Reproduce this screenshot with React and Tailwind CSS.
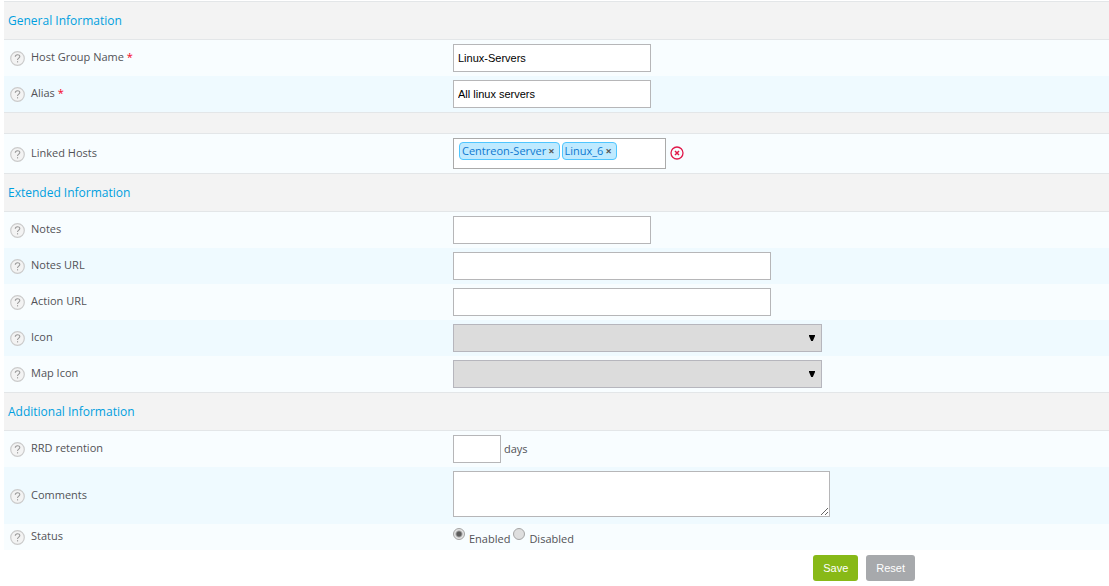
import React, { useState } from "react";

const HOSTS = ["Centreon-Server", "Linux_6"];

const inputClass =
  "block h-7 border border-[#b6b6b8] bg-white px-1 font-['Liberation_Sans',Arial,sans-serif] text-[11px] text-black";

function HelpIcon({ label }) {
  return (
    <button type="button" aria-label={`Help: ${label}`} className="mt-px shrink-0">
      <svg width="15" height="15" viewBox="0 0 15 15" className="block">
        <circle cx="7.5" cy="7.5" r="6.8" fill="#f3f3f3" stroke="#cbcbcb" strokeWidth="1.2" />
        <path
          d="M5.3 5.7 C5.3 3.1 9.8 3.1 9.8 5.5 C9.8 7 7.5 7.2 7.5 9"
          fill="none"
          stroke="#999"
          strokeWidth="1.1"
        />
        <rect x="7" y="10.2" width="1.1" height="1.2" fill="#999" />
      </svg>
    </button>
  );
}

function SectionHeader({ children }) {
  return (
    <h2 className="border-y border-[#e3e6e8] bg-[#f3f3f3] px-1 pt-[9px] pb-2 text-[12px] leading-5 text-[#009fdf]">
      {children}
    </h2>
  );
}

function Row({ label, htmlFor, required, shaded, className = "py-1", children }) {
  return (
    <div className={`flex items-center ${shaded ? "bg-[#effaff]" : "bg-[#f8fdff]"} ${className}`}>
      <div className="flex w-2/5 shrink-0 items-center gap-1.5 pl-1.5">
        <HelpIcon label={label} />
        <label htmlFor={htmlFor} id={`${htmlFor}-label`} className="pb-0.5">
          {label}
          {required && <span className="text-[#f5001d]"> *</span>}
        </label>
      </div>
      <div className="min-w-0 flex-1 pl-[7px]">{children}</div>
    </div>
  );
}

function IconSelect({ id }) {
  return (
    <div className="relative w-[369px] max-w-full">
      <select
        id={id}
        className="block h-7 w-full appearance-none border border-[#b6b6bd] bg-[#dcdcdc] px-1 text-[11px]"
      >
        <option value=""></option>
      </select>
      <svg
        width="6"
        height="6"
        viewBox="0 0 6 6"
        className="pointer-events-none absolute top-[11px] right-[7px]"
      >
        <path d="M0 0 H6 V1 L3.8 6 H2.2 L0 1 Z" fill="#000" />
      </svg>
    </div>
  );
}

function StatusRadio({ value, label, status, onChange }) {
  return (
    <label className="flex gap-1">
      <input
        type="radio"
        name="status"
        value={value}
        checked={status === value}
        onChange={() => onChange(value)}
        className="mt-px size-3 appearance-none rounded-full border border-[#a5a5a5] bg-[#dedede] checked:bg-[radial-gradient(circle,#5c5c5c_2px,#e4e4e4_4px)]"
      />
      <span className="pt-1">{label}</span>
    </label>
  );
}

export default function App() {
  const [hosts, setHosts] = useState(HOSTS);
  const [status, setStatus] = useState("enabled");

  return (
    <form
      onSubmit={(e) => e.preventDefault()}
      className="bg-white pt-px pl-1 font-['Open_Sans',sans-serif] text-[11px] leading-4 text-[#525256]"
    >
      {/* General */}
      <SectionHeader>General Information</SectionHeader>
      <Row label="Host Group Name" htmlFor="hg_name" required>
        <input id="hg_name" type="text" defaultValue="Linux-Servers" className={`${inputClass} w-[198px]`} />
      </Row>
      <Row label="Alias" htmlFor="hg_alias" required shaded>
        <input id="hg_alias" type="text" defaultValue="All linux servers" className={`${inputClass} w-[198px]`} />
      </Row>
      <div className="h-[22px] border-y border-[#e3e6e8] bg-[#f3f3f3]" />
      <Row label="Linked Hosts" htmlFor="hg_hosts">
        <div className="flex items-center gap-1">
          <div className="flex h-[31px] w-[213px] items-start gap-0.5 border border-[#aaa] bg-white px-[5px] pt-[3px]">
            {hosts.map((host) => (
              <span
                key={host}
                className="flex h-[18px] shrink-0 items-center gap-0.5 rounded border border-[#4fc6ff] bg-[#bfeaff] px-0.5 text-[#0c78d0]"
              >
                {host}
                <button
                  type="button"
                  aria-label={`Remove ${host}`}
                  onClick={() => setHosts(hosts.filter((h) => h !== host))}
                  className="pr-0.5 font-bold text-[#555]"
                >
                  ×
                </button>
              </span>
            ))}
            <input id="hg_hosts" type="text" className="h-[18px] w-0 min-w-0 flex-1 outline-none" />
          </div>
          <button type="button" aria-label="Clear hosts" onClick={() => setHosts([])} className="pb-px">
            <svg width="14" height="14" viewBox="0 0 14 14" className="block" fill="none" stroke="#e0184a">
              <circle cx="7" cy="7" r="6" strokeWidth="1.3" />
              <path d="M5 5 L9 9 M9 5 L5 9" strokeWidth="1.5" />
            </svg>
          </button>
        </div>
      </Row>

      {/* Extended */}
      <SectionHeader>Extended Information</SectionHeader>
      <Row label="Notes" htmlFor="hg_notes">
        <input id="hg_notes" type="text" className={`${inputClass} w-[198px]`} />
      </Row>
      <Row label="Notes URL" htmlFor="hg_notes_url" shaded>
        <input id="hg_notes_url" type="text" className={`${inputClass} w-[318px]`} />
      </Row>
      <Row label="Action URL" htmlFor="hg_action_url">
        <input id="hg_action_url" type="text" className={`${inputClass} w-[318px]`} />
      </Row>
      <Row label="Icon" htmlFor="hg_icon" shaded>
        <IconSelect id="hg_icon" />
      </Row>
      <Row label="Map Icon" htmlFor="hg_map_icon">
        <IconSelect id="hg_map_icon" />
      </Row>

      {/* Additional */}
      <SectionHeader>Additional Information</SectionHeader>
      <Row label="RRD retention" htmlFor="hg_rrd">
        <div className="flex items-center gap-[3px]">
          <input id="hg_rrd" type="text" className={`${inputClass} w-12`} />
          <span>days</span>
        </div>
      </Row>
      <Row label="Comments" htmlFor="hg_comment" shaded>
        <div className="pb-[3px]">
          <textarea
            id="hg_comment"
            className="block h-[46px] w-[377px] max-w-full border border-[#b6b6b8] bg-white p-1 text-[11px]"
          />
        </div>
      </Row>
      <Row label="Status" htmlFor="hg_status" className="py-[3px]">
        <div id="hg_status" role="radiogroup" aria-labelledby="hg_status-label" className="flex gap-[3px]">
          <StatusRadio value="enabled" label="Enabled" status={status} onChange={setStatus} />
          <StatusRadio value="disabled" label="Disabled" status={status} onChange={setStatus} />
        </div>
      </Row>

      <div className="flex justify-end gap-2 pt-[5px] pr-[194px] font-['Liberation_Sans',Arial,sans-serif] text-white">
        <button type="submit" className="h-[26px] rounded-[3px] bg-[#88b917] px-2.5">
          Save
        </button>
        <button type="reset" className="h-[26px] rounded-[3px] bg-[#a7a9ac] px-2.5">
          Reset
        </button>
      </div>
    </form>
  );
}
